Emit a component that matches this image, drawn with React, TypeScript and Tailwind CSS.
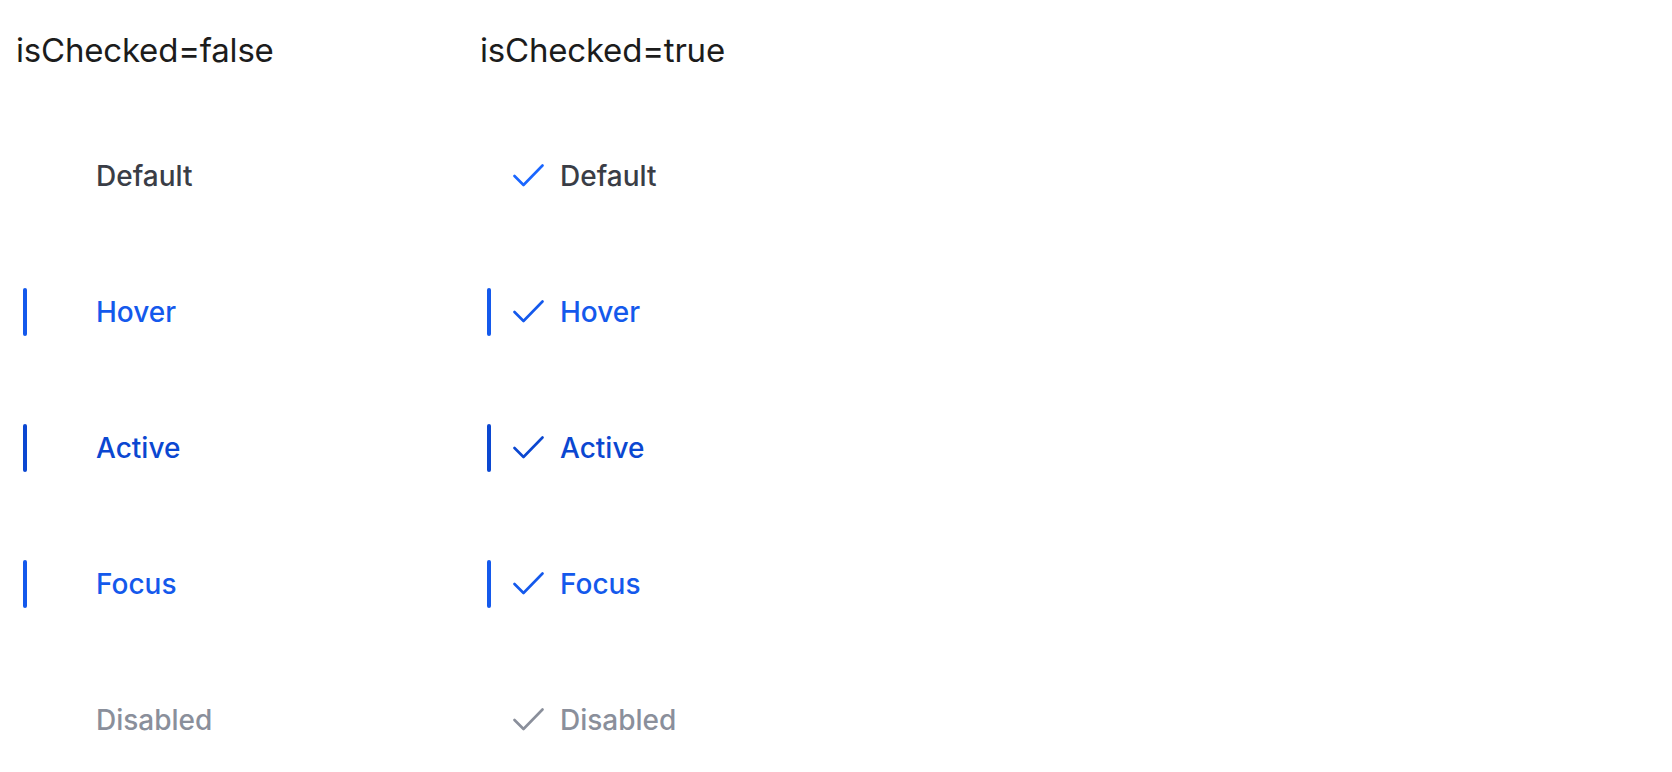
const STATES = [
  { label: "Default", text: "text-[#3a3d46]", bar: "", check: "stroke-[#1a66ff]" },
  { label: "Hover", text: "text-[#1459ec]", bar: "bg-[#1459ec]", check: "stroke-[#1459ec]" },
  { label: "Active", text: "text-[#0b47d1]", bar: "bg-[#0b47d1]", check: "stroke-[#0b47d1]" },
  { label: "Focus", text: "text-[#1459ec]", bar: "bg-[#1459ec]", check: "stroke-[#1459ec]" },
  { label: "Disabled", text: "text-[#8a8f9b]", bar: "", check: "stroke-[#8a8f9b]" },
];

function Check({ className }: { className: string }) {
  return (
    <svg viewBox="0 0 32 32" className="w-8 h-8" fill="none" aria-hidden="true">
      <path
        d="M1.5 16 L10.5 25 L29.5 5.5"
        className={className}
        strokeWidth="2.6"
        strokeLinecap="round"
        strokeLinejoin="round"
      />
    </svg>
  );
}

function Column({ checked }: { checked: boolean }) {
  return (
    <div className="flex flex-col">
      <h2 className="text-[33px] leading-[40px] text-[#1c1c1c] font-normal tracking-[-0.2px]">
        isChecked={checked ? "true" : "false"}
      </h2>
      <ul className="flex flex-col gap-[88px] mt-[82px]">
        {STATES.map((s) => (
          <li key={s.label} className="flex items-center h-12 pl-[7px]">
            <span className={`w-1 h-12 rounded-full ${s.bar}`} />
            <span className="ml-[22px] w-8 h-8 flex items-center justify-center">
              {checked && <Check className={s.check} />}
            </span>
            <span className={`ml-[15px] text-[28px] leading-none font-medium ${s.text}`}>
              {s.label}
            </span>
          </li>
        ))}
      </ul>
    </div>
  );
}

export default function App() {
  return (
    <div
      className="min-h-screen bg-white pt-[30px] pl-4"
      style={{ fontFamily: "Inter, 'Noto Sans', sans-serif" }}
    >
      <div className="grid grid-cols-[464px_464px]">
        <Column checked={false} />
        <Column checked={true} />
      </div>
    </div>
  );
}
